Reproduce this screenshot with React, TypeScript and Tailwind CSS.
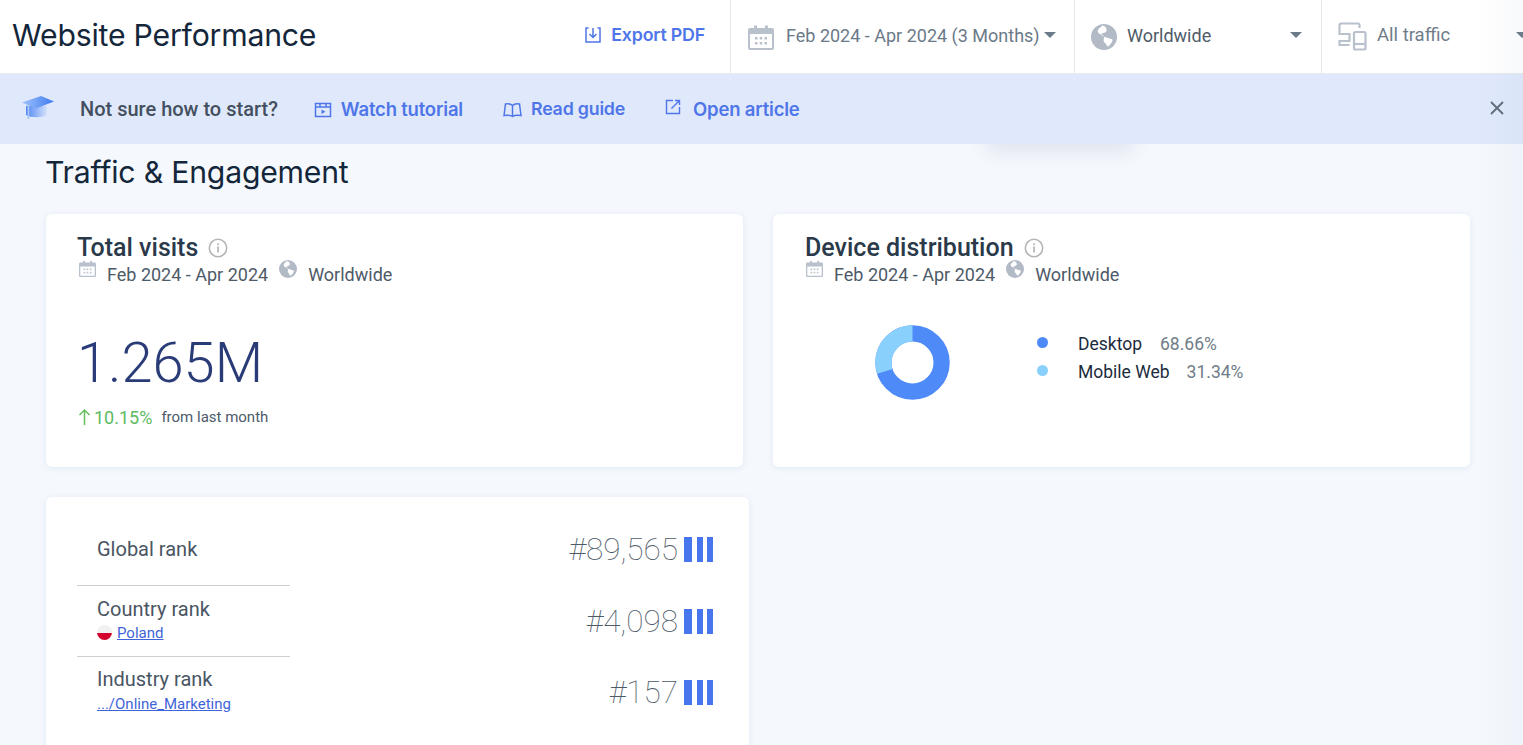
import React from "react";

const Caret = ({ className = "" }: { className?: string }) => (
  <svg width="12" height="6" viewBox="0 0 12 6" className={className}><path d="M0 0h12L6 6z" fill="#6b7a8a" /></svg>
);
const Calendar = ({ size = 26 }: { size?: number }) => (
  <svg width={size} height={size} viewBox="0 0 26 26" fill="none">
    <path d="M2 5h22a1 1 0 0 1 1 1v18a1 1 0 0 1-1 1H2a1 1 0 0 1-1-1V6a1 1 0 0 1 1-1z" stroke="#b9c1cd" strokeWidth="2" />
    <path d="M1 5h24v5H1z" fill="#b9c1cd" />
    <rect x="6" y="1.500" width="3" height="5" fill="#b9c1cd" /><rect x="17" y="1.500" width="3" height="5" fill="#b9c1cd" />
    <g fill="#b9c1cd">
      <rect x="7" y="13" width="2.500" height="2.500" /><rect x="11.700" y="13" width="2.500" height="2.500" /><rect x="16.500" y="13" width="2.500" height="2.500" />
      <rect x="7" y="18" width="2.500" height="2.500" /><rect x="11.700" y="18" width="2.500" height="2.500" /><rect x="16.500" y="18" width="2.500" height="2.500" />
    </g>
  </svg>
);
const Globe = ({ size = 26 }: { size?: number }) => (
  <svg width={size} height={size} viewBox="0 0 26 26">
    <circle cx="13" cy="13" r="13" fill="#b2bac6" />
    <path d="M11 1.500c-1 2-3 2.500-4 4.500s1 4 3 4.500 3.500 1.500 3 3.500-1 3 1 5 2 4 3 3.500 4-4 4.500-6-2.500-1.500-4.500-2.500-4-1-5.500-2-1-2.500.5-3 3-.5 3.500-2-.5-3-1-4-2.500-1-3.500-1.500z" fill="#fff" />
  </svg>
);
const Devices = () => (
  <svg width="29" height="29" viewBox="0 0 29 29" fill="none" stroke="#b9c1cd" strokeWidth="2.200" className="shrink-0">
    <path d="M1.500 13V3a1.500 1.500 0 0 1 1.500-1.500h17A1.500 1.500 0 0 1 21.500 3v3" />
    <path d="M1.500 12h10v7h-10v4h10" />
    <rect x="16" y="10" width="11.500" height="17.500" rx="1.500" />
    <path d="M16 22h11.500" />
  </svg>
);
const Info = () => (
  <svg width="20" height="20" viewBox="0 0 20 20" fill="none">
    <circle cx="10" cy="10" r="8.700" stroke="#b5b5b5" strokeWidth="1.600" />
    <rect x="9.200" y="8.500" width="1.700" height="6" fill="#b5b5b5" /><rect x="9.200" y="5.300" width="1.700" height="1.800" fill="#b5b5b5" />
  </svg>
);
const Bars = () => (
  <div className="flex gap-[4.500px] ml-[6px] mb-[2px]">
    <div className="w-[8px] h-[25px] bg-[#4775ee]" /><div className="w-[6px] h-[25px] bg-[#4775ee]" /><div className="w-[6px] h-[25px] bg-[#4775ee]" />
  </div>
);
const Meta = () => (
  <div className="flex items-start h-[22px] text-[18px] leading-[22px] text-[#4d5a68] font-['Roboto',sans-serif]">
    <span className="ml-[1px] mr-[11px] mt-[-2px]"><Calendar size={17} /></span>
    <span className="mt-[2px]">Feb 2024 - Apr 2024</span>
    <span className="ml-[11px] mr-[11px] mt-[-2px]"><Globe size={18} /></span>
    <span className="mt-[2px]">Worldwide</span>
  </div>
);
const CardHead = ({ title }: { title: string }) => (
  <div className="flex items-center h-[30px]">
    <span className="text-[25px] font-medium text-[#2a3a4a] font-['Roboto',sans-serif] mt-[1px]">{title}</span>
    <span className="ml-[10px] mt-[1px]"><Info /></span>
  </div>
);
const Rank = ({ label, sub, flag, value, h, line, up }: { label: string; sub?: string; flag?: boolean; value: string; h: string; line?: boolean; up?: boolean }) => (
  <div className={`flex items-center justify-between ${h}`}>
    <div className={`w-[213px] h-full pl-[20px] flex flex-col justify-center ${line ? "border-b border-[#cfcfcf]" : ""}`}>
      <div className={`text-[20px] leading-[26px] text-[#4a5563] ${up ? "mt-[-3px] mb-[3px]" : sub ? "mt-[-2px] mb-[2px]" : "mt-[-1px] mb-[1px]"}`}>{label}</div>
      {sub && (
        <div className="flex items-center gap-[5px] mb-[3px]">
          {flag && (
            <span className="w-[15px] h-[15px] rounded-full overflow-hidden flex flex-col">
              <span className="h-1/2 bg-[#f1f1f1]" /><span className="h-1/2 bg-[#d4012c]" />
            </span>
          )}
          <a className="text-[15px] leading-[18px] underline text-[#3f63d8]">{sub}</a>
        </div>
      )}
    </div>
    <div className={`flex items-center ${sub ? "mt-[2px]" : ""}`}>
      <span className="text-[31.500px] font-thin text-[#4d5a68] mt-[-1px]">{value}</span>
      <Bars />
    </div>
  </div>
);

export default function App() {
  return (
    <div className="relative w-full h-screen overflow-hidden bg-[#f5f9fe] font-['Roboto',sans-serif]">
      <header className="relative z-10 h-[74px] bg-white flex items-stretch border-b border-[#e6e9ee]">
        <div className="flex-1 flex items-center justify-between pl-[12px] pr-[25px]">
          <h1 className="text-[30.200px] text-[#14263a] font-['Inter',sans-serif] tracking-[-0.2px] mb-[2px]">Website Performance</h1>
          <a className="flex items-center gap-[9px] text-[17.800px] font-semibold text-[#4f76e8] font-['Inter',sans-serif] tracking-[-0.2px] mb-[3px]">
            <svg width="18" height="18" viewBox="0 0 18 18" fill="none" stroke="#4f76e8" strokeWidth="1.500">
              <path d="M4.500 2H2v14h14V2h-2.500M9 2v9M5.500 8 9 11.500 12.500 8" />
            </svg>
            Export PDF
          </a>
        </div>
        <div className="w-[344px] border-l border-[#e6e9ee] flex items-center pl-[17px]">
          <Calendar />
          <span className="ml-[12px] text-[18px] text-[#6b7a88] whitespace-nowrap mb-[3px]">Feb 2024 - Apr 2024 (3 Months)</span>
          <Caret className="ml-[4px] mb-[4px]" />
        </div>
        <div className="w-[247px] border-l border-[#e6e9ee] flex items-center pl-[16px]">
          <Globe />
          <span className="ml-[10px] text-[18px] text-[#4f5b68] flex-1 mb-[3px]">Worldwide</span>
          <Caret className="mr-[19px] mb-[4px]" />
        </div>
        <div className="w-[202px] shrink-0 border-l border-[#e6e9ee] flex items-center pl-[16px] overflow-hidden">
          <Devices />
          <span className="ml-[10px] text-[18.500px] text-[#6f7c8a] whitespace-nowrap mb-[1px]">All traffic</span>
          <Caret className="ml-[66px] mb-[4px] shrink-0" />
        </div>
      </header>

      <div className="z-10 h-[70px] bg-[#e0e9fc] flex items-center pl-[21px] relative">
        <svg width="36" height="26" viewBox="0 0 36 26" className="mb-[2px]">
          <defs>
            <linearGradient id="cap" x1="0" x2="1"><stop offset="0" stopColor="#9ec2fb" /><stop offset="1" stopColor="#3f7bf0" /></linearGradient>
            <linearGradient id="capb" x1="0" x2="1"><stop offset="0" stopColor="#4f86f3" /><stop offset="1" stopColor="#d5e2fb" /></linearGradient>
          </defs>
          <path d="M5 11v9c5 3 16 3 21 0v-9z" fill="url(#capb)" />
          <path d="M1 7.500 20 1l13 5.500-18 7z" fill="url(#cap)" />
          <rect x="6.500" y="10" width="1.800" height="14" fill="#a9c4f5" />
        </svg>
        <span className="ml-[23px] text-[20px] font-medium text-[#44505f]">Not sure how to start?</span>
        <a className="ml-[36px] flex items-center gap-[9px] text-[18.500px] font-semibold text-[#4f76e8] font-['Inter',sans-serif] tracking-[-0.2px] mt-[1px]">
          <svg width="18" height="16" viewBox="0 0 18 16" fill="none" stroke="#4f76e8" strokeWidth="1.500">
            <rect x="1.500" y="1.500" width="15" height="13" /><path d="M1.500 5h15M6 1.500V5M12 1.500V5" /><path d="M7.500 7.500v4.500l4-2.200z" fill="#4f76e8" stroke="none" />
          </svg>
          Watch tutorial
        </a>
        <a className="ml-[40px] flex items-center gap-[9px] text-[17.800px] font-semibold text-[#4f76e8] font-['Inter',sans-serif] tracking-[-0.2px] mt-[1px]">
          <svg width="19" height="16" viewBox="0 0 19 16" fill="none" stroke="#4f76e8" strokeWidth="1.500">
            <path d="M9.500 3.500C8 2 5 1.500 2.500 2L1 13.500c3-.5 6.500-.5 8.500 1 2-1.500 5.500-1.500 8.500-1L16.500 2c-2.500-.5-5.500 0-7 1.500zM9.500 3.500v11" />
          </svg>
          Read guide
        </a>
        <a className="ml-[40px] flex items-center gap-[12px] text-[18.500px] font-semibold text-[#4f76e8] font-['Inter',sans-serif] tracking-[-0.2px] mt-[1px]">
          <svg width="16" height="16" viewBox="0 0 16 16" fill="none" stroke="#4f76e8" strokeWidth="1.400" className="mb-[6px]">
            <path d="M8 1.500H1.500v13h13V8M6.500 9.500l8-8M10 1.500h4.500V6" />
          </svg>
          Open article
        </a>
        <button className="absolute right-[19px] top-[27px]">
          <svg width="14" height="14" viewBox="0 0 14 14" stroke="#606b78" strokeWidth="1.800"><path d="M1 1l12 12M13 1 1 13" /></svg>
        </button>
      </div>

      <div className="absolute left-[985px] top-[124px] w-[150px] h-[20px] shadow-[0_8px_18px_rgba(120,130,150,0.18)] rounded-full" />

      <main className="relative pl-[46px] pr-[53px]">
        <h2 className="h-[70px] ml-[-1px] flex items-center text-[30.200px] text-[#14263a] font-['Inter',sans-serif] tracking-[-0.2px] pb-[12px]">Traffic &amp; Engagement</h2>
        <div className="grid grid-cols-2 gap-[30px]">
          <section className="h-[253px] bg-white rounded-[6px] shadow-[0_1px_6px_rgba(120,140,170,0.15)] pl-[31px] pt-[18px]">
            <CardHead title="Total visits" />
            <div className="ml-[1px]"><Meta /></div>
            <div className="mt-[43px] text-[56px] leading-[72px] font-light text-[#2a3c78]">1.265M</div>
            <div className="mt-[6px] flex items-center h-[24px]">
              <svg width="13" height="18" viewBox="0 0 13 18" fill="none" stroke="#63c05c" strokeWidth="1.500" className="ml-[1px]"><path d="M6.500 17V2M1.500 7l5-5 5 5" /></svg>
              <span className="ml-[3px] text-[18px] text-[#5dbb62]">10.15%</span>
              <span className="ml-[9px] text-[15px] text-[#4d5a68]">from last month</span>
            </div>
          </section>
          <section className="h-[253px] bg-white rounded-[6px] shadow-[0_1px_6px_rgba(120,140,170,0.15)] pl-[32px] pt-[18px]">
            <CardHead title="Device distribution" />
            <Meta />
            <div className="flex mt-[40px]">
              <svg width="75" height="75" viewBox="0 0 76 76" className="ml-[70px] mt-[1px]">
                <circle cx="38" cy="38" r="29.500" fill="none" stroke="#4e8bf8" strokeWidth="16.500" />
                <path d="M38 8.500A29.500 29.500 0 0 0 10 47" fill="none" stroke="#8ad0fd" strokeWidth="16.500" />
              </svg>
              <div className="ml-[87px] mt-[6px] text-[17.500px] leading-[28px]">
                <div className="flex items-center">
                  <span className="w-[11px] h-[11px] rounded-full bg-[#4e8bf8] mr-[30px] mb-[3px]" />
                  <span className="text-[#1c2b3c] mr-[18px]">Desktop</span><span className="text-[#6f7c88]">68.66%</span>
                </div>
                <div className="flex items-center">
                  <span className="w-[11px] h-[11px] rounded-full bg-[#8ad0fd] mr-[30px] mb-[3px]" />
                  <span className="text-[#1c2b3c] mr-[17px]">Mobile Web</span><span className="text-[#6f7c88]">31.34%</span>
                </div>
              </div>
            </div>
          </section>
        </div>
        <section className="mt-[30px] w-[703px] h-[300px] bg-white rounded-[6px] shadow-[0_1px_6px_rgba(120,140,170,0.15)] pl-[31px] pr-[36px] pt-[18px]">
          <Rank label="Global rank" value="#89,565" h="h-[71px]" line />
          <Rank label="Country rank" sub="Poland" flag value="#4,098" h="h-[71px]" line />
          <Rank label="Industry rank" sub=".../Online_Marketing" value="#157" h="h-[71px]" up />
        </section>
      </main>
      <div className="absolute right-0 top-0 bottom-0 w-[45px] bg-gradient-to-r from-transparent to-[rgba(120,140,170,0.05)] pointer-events-none z-20" />
    </div>
  );
}
